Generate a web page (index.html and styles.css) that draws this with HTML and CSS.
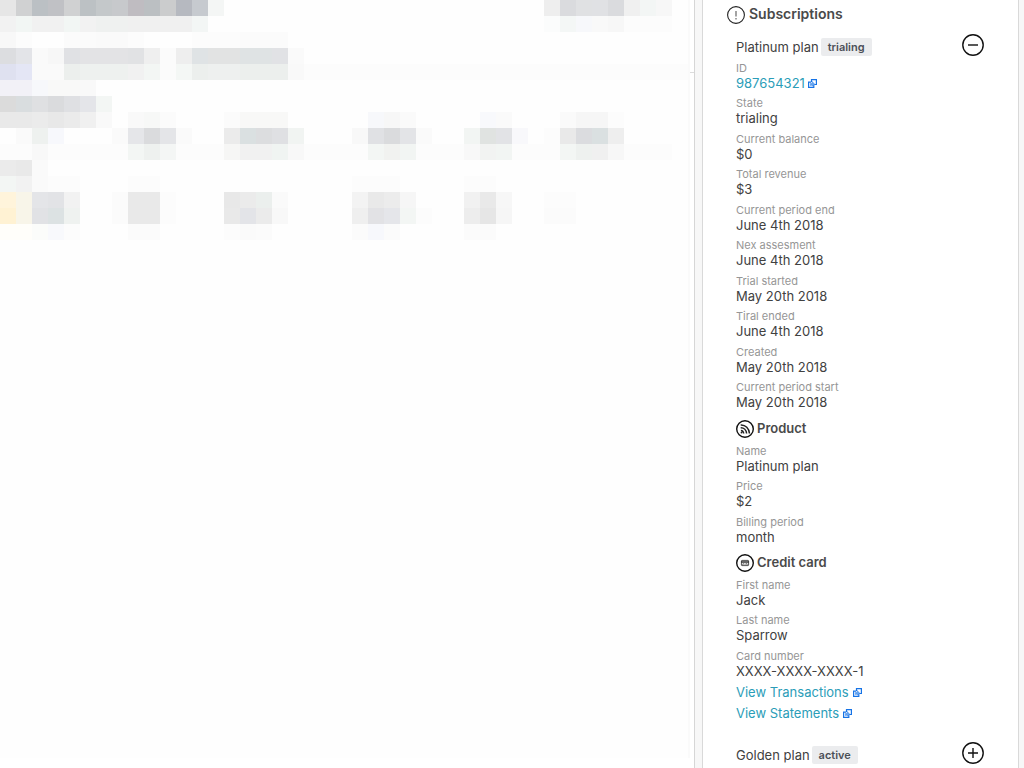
FILE: index.html
```
<!DOCTYPE html>
<html lang="en">
<head>
<meta charset="utf-8">
<meta name="viewport" content="width=device-width, initial-scale=1">
<title>Subscriptions</title>
<link rel="stylesheet" href="styles.css">
</head>
<body>
<svg class="sprite" aria-hidden="true">
  <symbol id="external" viewBox="0 0 9 9">
    <path d="M3.5 3V.6h4.9v4.9H6.2M3 3.1H.6v5.3h5.2V6" fill="none" stroke="#1673e6" stroke-width="1.2"/>
    <path d="M2.4 6.6V4.4h1.8V2.6l2.6 2.6-2.6 1.9V6.2H3.3z" fill="#69a8f2" stroke="#2a7de8" stroke-width=".5"/>
  </symbol>
</svg>
<div class="page">
  <main class="content">
    <svg class="mosaic" id="mosaic" viewBox="0 0 43 15" shape-rendering="crispEdges" role="img" aria-label="Obscured conversation"></svg>
  </main>
  <div class="gutter"></div>
  <aside class="sidebar">
    <section class="panel">
      <h2 class="panel-title">
        <svg class="icon-title" viewBox="0 0 18 18" aria-hidden="true"><circle cx="9" cy="9" r="8.4" fill="none" stroke="#222" stroke-width="1.1"/><path d="M9 5v5.6M9 12v1.4" stroke="#666" stroke-width="1.2"/></svg>
        Subscriptions
      </h2>
      <article class="plan">
        <header class="plan-head">
          <span>Platinum plan</span><span class="badge">trialing</span>
          <button class="toggle" type="button" aria-label="Collapse Platinum plan" aria-expanded="true"><svg viewBox="0 0 22 22"><circle cx="11" cy="11" r="10.2"/><path d="M6 11h10"/></svg></button>
        </header>
        <dl class="fields">
          <div><dt>ID</dt><dd><a href="#subscription">987654321<svg class="external id-external"><use href="#external"/></svg></a></dd></div>
          <div><dt>State</dt><dd>trialing</dd></div>
          <div><dt>Current balance</dt><dd>$0</dd></div>
          <div><dt>Total revenue</dt><dd>$3</dd></div>
          <div><dt>Current period end</dt><dd>June 4th 2018</dd></div>
          <div><dt>Nex assesment</dt><dd>June 4th 2018</dd></div>
          <div><dt>Trial started</dt><dd>May 20th 2018</dd></div>
          <div><dt>Tiral ended</dt><dd>June 4th 2018</dd></div>
          <div><dt>Created</dt><dd>May 20th 2018</dd></div>
          <div><dt>Current period start</dt><dd>May 20th 2018</dd></div>
        </dl>
        <h3 class="group-title">
          <svg class="icon-title" viewBox="0 0 18 18" aria-hidden="true"><circle cx="9" cy="9" r="8.3" fill="none" stroke="#111" stroke-width="1.4"/><g fill="none" stroke="#222" stroke-width="1.5"><path d="M4.7 4.9c4.8-.3 8.5 3.5 8.8 8.6M4.7 7.8c3.2-.1 5.6 2.4 5.9 5.7M4.9 10.5c1.5.1 2.6 1.3 2.8 3"/></g><circle cx="5.5" cy="12.6" r=".9" fill="#222"/></svg>
          Product
        </h3>
        <dl class="fields">
          <div><dt>Name</dt><dd>Platinum plan</dd></div>
          <div><dt>Price</dt><dd>$2</dd></div>
          <div><dt>Billing period</dt><dd>month</dd></div>
        </dl>
        <h3 class="group-title">
          <svg class="icon-title" viewBox="0 0 18 18" aria-hidden="true"><circle cx="9" cy="9" r="8.3" fill="none" stroke="#111" stroke-width="1.4"/><rect x="5.4" y="6.4" width="7.2" height="5.2" rx=".6" fill="#ddd" stroke="#444" stroke-width=".9"/><path d="M5 8h8" stroke="#333" stroke-width="1.4"/><path d="M6.4 10.6l1.6-1M9 10.6l1-1 1.5 1" fill="none" stroke="#444" stroke-width=".8"/></svg>
          Credit card
        </h3>
        <dl class="fields">
          <div><dt>First name</dt><dd>Jack</dd></div>
          <div><dt>Last name</dt><dd>Sparrow</dd></div>
          <div><dt>Card number</dt><dd>XXXX-XXXX-XXXX-1</dd></div>
        </dl>
        <nav class="links">
          <a href="#transactions">View Transactions<svg class="external"><use href="#external"/></svg></a>
          <a href="#statements">View Statements<svg class="external"><use href="#external"/></svg></a>
        </nav>
      </article>
      <article class="plan">
        <header class="plan-head">
          <span>Golden plan</span><span class="badge">active</span>
          <button class="toggle" type="button" aria-label="Expand Golden plan" aria-expanded="false"><svg viewBox="0 0 22 22"><circle cx="11" cy="11" r="10.2"/><path d="M6 11h10M11 6v10"/></svg></button>
        </header>
      </article>
    </section>
  </aside>
</div>
<script src="mosaic.js"></script>
</body>
</html>
```
FILE: styles.css
```
* { box-sizing: border-box; }
body {
  margin: 0;
  background: #fff;
  color: #414141;
  font: 13px/16px Inter, "Noto Sans", sans-serif;
}
h2, h3, dl, dd { margin: 0; }
a { color: #2b9db8; text-decoration: none; }
.sprite { display: none; }
.page { display: flex; min-height: 100vh; }
.content {
  flex: 1;
  min-width: 0;
  background: #fefefe;
  border-right: 2px solid #fafafa;
  margin-bottom: 10px;
}
.mosaic { display: block; width: 688px; max-width: 100%; }
.gutter {
  width: 4px;
  height: 73px;
  border-bottom: 1px solid #dcdcdc;
}
.sidebar {
  display: flex;
  flex: 0 0 330px;
  padding: 0 5px 0 7px;
  background: #f7f7f7;
  border-left: 1px solid #d6d6d6;
}
.panel {
  flex: 1;
  padding: 4px 34px 0 24px;
  background: #fff;
  border: solid #d9d9d9;
  border-width: 0 1px;
}
.panel-title, .group-title {
  display: flex;
  align-items: center;
  color: #4a4a4a;
  font-weight: 600;
}
.panel-title { gap: 4px; font-size: 14px; line-height: 20px; }
.group-title { gap: 3px; height: 20px; margin: 3px 0 5px; font-size: 13px; }
.icon-title { width: 18px; height: 18px; flex: none; margin-top: 2px; }
.plan { padding: 9px 0 0 9px; }
.plan + .plan { padding-top: 20px; }
.plan-head { display: flex; align-items: center; gap: 2px; height: 27px; }
.badge {
  padding: 1px 7px;
  border-radius: 2px;
  background: #ebecee;
  color: #4b5058;
  font-size: 11px;
  font-weight: 600;
}
.toggle {
  width: 22px;
  height: 22px;
  margin: 0 0 4px auto;
  padding: 0;
  border: 0;
  background: none;
}
.toggle svg { display: block; fill: none; stroke: #111; stroke-width: 1.4; }
.fields { display: grid; }
.fields div { padding-bottom: 4px; }
.fields div:nth-child(even) { padding-bottom: 5px; }
.fields dt { padding-top: 1px; color: #969696; font-size: 11px; line-height: 15px; }
.fields dd { line-height: 15px; }
.external { width: 9px; height: 9px; margin-left: 4px; }
.id-external { margin-left: 3px; }
.links { display: grid; gap: 5px; justify-items: start; padding-top: 1px; }
```
FILE: mosaic.js
```
// Each row lists runs as "column width colour"; one cell is one unit of the viewBox.
const rows = [
  "0 1 e6e6e6,1 1 d0d1d2,2 1 bbc0c4,3 1 c0c1c5,4 1 d0d1d2,5 1 bcc1c4,6 1 c4c8ca,7 1 c7c9cc,8 1 bfbcc1,9 1 bbbfc2,10 1 cbcccd,11 1 b6b9c0,12 1 c6cacf,13 1 f4f6f5,34 1 eeeeee,35 1 dadbde,36 1 e0e1e3,37 1 e0e1e4,38 1 dadbde,39 1 f0f0f0,40 1 f3f6f5,41 1 f7f7f7",
  "0 1 f2f2f2,1 1 f2f6f4,2 2 f1f1f1,4 1 f2f6f4,5 1 f2f2f2,6 2 eff1f0,8 4 f0f0f0,12 1 f3f6f5,34 1 fbfcfc,35 1 f4f7f6,36 1 f7f8fb,37 1 f9f9f9,38 1 f7f7f7,39 3 fcfcfc",
  "0 1 f8f8f8,1 1 fcfcfc,4 2 fbfbfb,6 2 fafafa,8 1 fcfcfc,12 3 fcfcfc,15 3 fbfbfb",
  "0 1 dcdde0,1 1 e3e4e8,2 1 fafafa,3 1 f7f7f7,4 1 e0e1e4,5 3 e3e3e5,8 1 e1e2e4,9 1 efefef,10 1 fbfbfb,11 1 eeeeee,12 1 dfe3e5,13 2 e2e3e3,15 2 dfe3e4,17 1 e1e2e5,18 1 fafafa",
  "0 1 dfe1f0,1 1 e4e6f5,2 2 fafafa,4 1 ecefed,5 3 eef1ef,8 1 f1f1f1,9 1 f3f6f4,10 1 fbfbfb,11 1 f4f7f5,12 1 ecefed,13 2 eef0ef,15 3 ecefed,18 1 f9f9f9,19 24 fcfcfc",
  "0 2 f2f1f7,2 1 f7f8fb,3 2 f9f9f8,5 1 f9f9f9",
  "0 1 dbdbdb,1 1 d9dddf,2 1 dfe0e2,3 1 dadbdd,4 1 dfe0e3,5 1 e4e5e9,6 1 f3f6f4",
  "0 2 e9e9e9,2 1 ebebeb,3 1 e8e8e8,4 1 ebebeb,5 1 f0f0f0,6 1 f9f9f9,8 1 f9f9f9,9 1 f7f8f7,10 1 fbfbfb,14 1 fbfbfb,15 3 f8f8f7,23 1 f7f8fb,24 1 f7f7f7,25 1 fafafa,30 1 f8f9fc,31 1 fafafa,35 1 fafafa,36 2 f6f6f6,38 1 fcfcfc",
  "1 1 fafafa,2 1 eef1ef,3 1 f7f8fc,7 1 fafafa,8 1 e5e6e9,9 1 dadbdd,10 1 e4e5e8,11 1 fafafa,14 1 ebebeb,15 1 dae0e1,16 1 dcdddf,17 1 dfe0e3,18 1 f1f4f2,22 1 f8f8f8,23 1 e0e1e4,24 1 dadbdd,25 1 e3e4e7,26 1 fafafa,29 1 f2f5f3,30 1 e0e3e1,31 1 e2e3e6,32 1 f8f8fb,34 1 fcfcfc,35 1 e9e9e9,36 1 dbdcdf,37 1 dae0e1,38 1 eeeeee",
  "0 2 fcfcfc,2 1 f8f8f8,3 5 fcfcfc,8 1 f3f6f4,9 1 eef1ef,10 1 f4f6f5,11 3 fcfcfc,14 1 f6f6f5,15 2 f1f1f1,17 1 f0f4f2,18 1 f8f8f8,19 4 fcfcfc,23 1 f3f6f4,24 1 f1f2f0,25 1 f2f5f3,26 3 fcfcfc,29 1 f8f8f8,30 1 f2f3f2,31 1 f2f5f3,32 3 fcfcfc,35 1 f3f6f4,36 1 eef1ef,37 1 f0f0f0,38 1 f7f7f7,39 3 fcfcfc",
  "0 1 ebebeb,1 1 e9e9e9,2 1 fafafa",
  "0 1 f3f6f4,1 1 f2f2f2,2 1 fafafa,3 2 fcfcfc,8 2 fcfcfc,22 3 fcfcfc,29 2 fcfcfc",
  "0 1 fff4db,1 1 f8f5e9,2 1 e4e5e8,3 1 e2e3e6,4 1 f2f2f2,7 1 fbfbfb,8 2 e9e9e9,10 1 fcfcfc,14 1 e8e8e8,15 1 ebebeb,16 1 ebefed,17 1 fafafa,22 1 f3f3f3,23 1 e9e9e9,24 1 ececec,25 1 f6f6f6,29 1 f1f1f1,30 1 e9e9e9,31 1 f7f7f7,34 2 fcfcfc",
  "0 1 fff2d3,1 1 f8f5e9,2 1 e1e2e5,3 1 dce2e3,4 1 eff2f0,7 1 fbfbfb,8 2 e9e9e9,10 1 fcfcfc,14 1 e9e9e9,15 1 e3e4e8,16 1 ebebeb,17 1 f8f8f8,22 1 efefef,23 1 e2e2e5,24 1 e5e6ea,25 1 f3f6f4,26 1 fcfcfc,29 1 ededed,30 1 e6e6e6,31 1 f6f6f6,34 2 fbfbfb",
  "0 2 fffefa,2 1 fbfcfa,3 1 f8f9fc,4 1 fcfcfc,8 2 fbfbfb,14 1 fcfcfc,15 1 fafafa,16 1 fbfbfb,22 1 fbfbfb,23 1 f7f8fc,24 1 fbfbfb,29 2 fbfbfb"
];

const mosaic = document.getElementById("mosaic");
rows.forEach((row, y) => {
  row.split(",").forEach((run) => {
    const [x, width, colour] = run.split(" ");
    const cell = document.createElementNS("http://www.w3.org/2000/svg", "rect");
    cell.setAttribute("x", x);
    cell.setAttribute("y", y);
    cell.setAttribute("width", width);
    cell.setAttribute("height", 1);
    cell.setAttribute("fill", "#" + colour);
    mosaic.append(cell);
  });
});
```
